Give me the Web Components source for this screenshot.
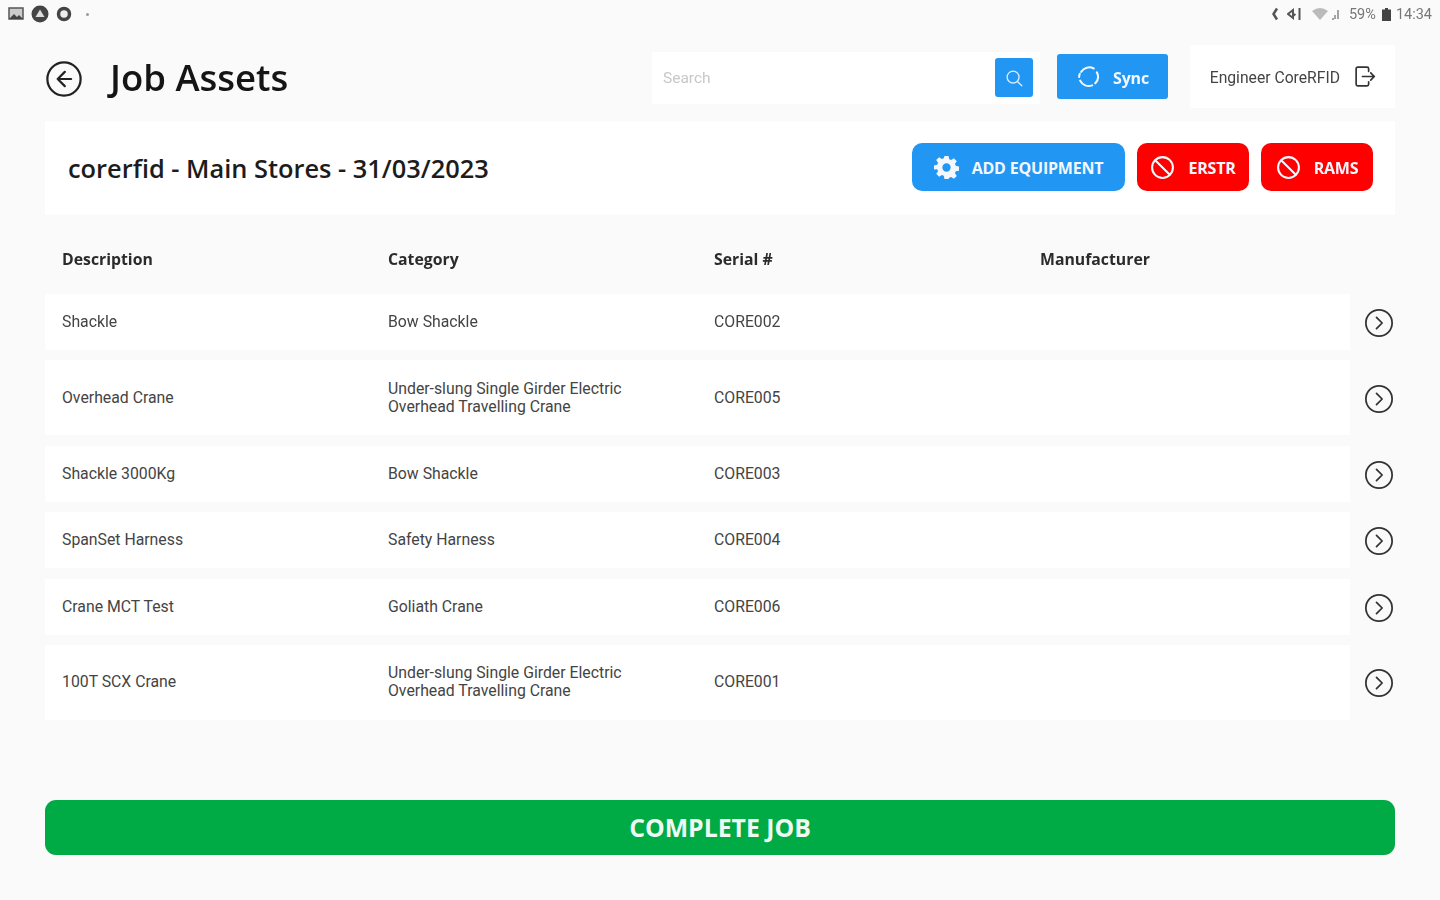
<!DOCTYPE html>
<html lang="en">
<head>
<meta charset="utf-8">
<title>Job Assets</title>
<style>
	html, body { margin: 0; height: 100%; background: #fafafa; }
	body { font-family: Roboto, "Liberation Sans", sans-serif; overflow: hidden; }
</style>
</head>
<body>
<job-assets-page></job-assets-page>

<script>
// shared icons, all drawn on a 24 box
const ICONS = {
	back: `<circle cx="12" cy="12" r="10.5"/><path d="M12.5 7.5 8 12l4.5 4.5M8 12h8.5"/>`,
	next: `<circle cx="12" cy="12" r="10.5"/><path d="m10 7.5 4.5 4.5-4.5 4.5"/>`,
	search: `<circle cx="11" cy="11" r="6.5"/><path d="m16 16 4.5 4.5"/>`,
	sync: `<path d="M5 7.5A9 9 0 0 1 17 4.3M20 8a9 9 0 0 1-1.5 10.5M15.5 20.5A9 9 0 0 1 4 16M3 12.5a9 9 0 0 1 .6-3"/>`,
	logout: `<path d="M15 7V4.5A1.5 1.5 0 0 0 13.5 3h-9A1.500 1.500 0 0 0 3 4.500v15A1.500 1.500 0 0 0 4.500 21h9a1.500 1.500 0 0 0 1.500-1.500V17M9 12h11M17 8.500l3.500 3.500-3.500 3.500"/>`,
	blocked: `<circle cx="12" cy="12" r="10"/><path d="m5 5 14 14"/>`,
	gear: `<path fill="currentColor" stroke="none" fill-rule="evenodd" d="M10 1h4l.6 3.100 1.900.8 2.600-1.800 2.800 2.800-1.800 2.600.8 1.900 3.100.6v4l-3.100.6-.8 1.900 1.800 2.600-2.800 2.800-2.600-1.800-1.900.8L14 23h-4l-.6-3.100-1.900-.8-2.600 1.800-2.800-2.800 1.800-2.600-.8-1.900L0 14v-4l3.100-.6.8-1.900-1.800-2.600 2.800-2.800 2.600 1.800 1.900-.8L10 1Zm2 7a4 4 0 1 0 0 8 4 4 0 0 0 0-8Z"/>`,
};

function icon(name, size, width = 2) {
	return `<svg width="${size}" height="${size}" viewBox="0 0 24 24" fill="none" stroke="currentColor" stroke-width="${width}" stroke-linecap="round" stroke-linejoin="round">${ICONS[name]}</svg>`;
}

class StatusBar extends HTMLElement {
	connectedCallback() {
		this.attachShadow({ mode: "open" }).innerHTML = `
			<style>
				:host { display: flex; justify-content: space-between; align-items: center; height: 28px; padding: 0 8px; color: #555; font: 13px Roboto, sans-serif; }
				.side { display: flex; align-items: center; gap: 7px; }
				.right { gap: 5px; color: #777; font-size: 14.500px; }
				.dot { width: 3px; height: 3px; border-radius: 50%; background: #999; margin-left: 7px; }
				svg { display: block; }
			</style>
			<div class="side">
				<svg width="16" height="14" viewBox="0 0 16 14"><rect x="1" y="1" width="14" height="11" fill="#ccc" stroke="#555" stroke-width="1.500"/><path d="M1 12l5-5 3 3 2-2 4 4z" fill="#444"/></svg>
				<svg width="18" height="18" viewBox="0 0 18 18"><circle cx="9" cy="9" r="8.500" fill="#444"/><path d="M9 4.500 13.500 12h-9z" fill="#ddd"/></svg>
				<svg width="16" height="16" viewBox="0 0 16 16"><circle cx="8" cy="8" r="5.500" fill="#eee" stroke="#444" stroke-width="3.500"/></svg>
				<span class="dot"></span>
			</div>
			<div class="side right">
				<svg width="8" height="14" viewBox="0 0 8 14" style="margin-right:3px"><path d="M6 1.500 2.500 7 6 12.500" fill="none" stroke="#555" stroke-width="2.500"/></svg>
				<svg width="14" height="14" viewBox="0 0 14 14" style="margin-right:5px"><path d="M1 7l5-4v8zM8.500 7 6 9M12.500 1v12" fill="none" stroke="#555" stroke-width="2"/></svg>
				<svg width="30" height="14" viewBox="0 0 30 14" style="margin-right:3px"><path d="M1 4q8-6 16 0l-8 9z" fill="#bbb"/><path d="M21 12h2M24 12V8M27 12V3" stroke="#888" stroke-width="1.500"/></svg>
				<span>59%</span>
				<svg width="9" height="13" viewBox="0 0 9 13" style="margin-left:1px"><path d="M3 0h3v1.500h3V13H0V1.500h3z" fill="#444"/></svg>
				<span>14:34</span>
			</div>`;
	}
}

class SearchBox extends HTMLElement {
	connectedCallback() {
		this.attachShadow({ mode: "open" }).innerHTML = `
			<style>
				:host { display: flex; align-items: center; justify-content: space-between; box-sizing: border-box; width: 388px; height: 52px; margin-top: 2px; padding: 0 7px 0 11px; background: #fff; }
				span { color: #c8c8c8; font: 15.500px Roboto, sans-serif; }
				button { display: flex; align-items: center; justify-content: center; width: 38px; height: 39px; padding: 0; border: 0; border-radius: 3px; background: #2196f3; color: #d7ecfd; }
			</style>
			<span>Search</span>
			<button>${icon("search", 22, 1.500)}</button>`;
	}
}

class AppButton extends HTMLElement {
	connectedCallback() {
		const name = this.getAttribute("icon");
		const isRed = this.hasAttribute("danger");
		this.attachShadow({ mode: "open" }).innerHTML = `
			<style>
				:host { display: inline-flex; align-items: center; justify-content: center; gap: var(--btn-gap, 13px); box-sizing: border-box; height: var(--btn-height, 48px); width: var(--btn-width, auto); border-radius: var(--btn-radius, 10px); background: ${isRed ? "#fe0000" : "#2196f3"}; color: #f2f8fe; font: 700 16px "Open Sans", sans-serif; letter-spacing: -.2px; }
				span { padding-top: 2px; }
				svg { display: block; }
			</style>
			${icon(name, 25, 2)}
			<span><slot></slot></span>`;
	}
}

class PageHeader extends HTMLElement {
	connectedCallback() {
		this.attachShadow({ mode: "open" }).innerHTML = `
			<style>
				:host { display: flex; align-items: center; height: 63px; }
				.back { display: block; margin: 5px 27px 0 0; color: #222; }
				h1 { flex: 1; margin: 0; padding-top: 2px; color: #151515; font: 600 36.500px/1 "Open Sans", sans-serif; }
				app-button { --btn-height: 45px; --btn-width: 111px; --btn-radius: 3px; --btn-gap: 12px; margin: 0 22px 0 17px; }
				.user { display: flex; align-items: center; justify-content: flex-end; gap: 13px; box-sizing: border-box; width: 205px; height: 63px; padding-right: 17px; background: #fff; color: #444; font: 15.700px Roboto, sans-serif; }
				.user span { padding-top: 2px; }
				.user svg { color: #333; }
				svg { display: block; }
			</style>
			<span class="back">${icon("back", 38, 1.400)}</span>
			<h1>Job Assets</h1>
			<search-box></search-box>
			<app-button icon="sync">Sync</app-button>
			<div class="user"><span>Engineer CoreRFID</span>${icon("logout", 25, 1.600)}</div>`;
	}
}

class JobBar extends HTMLElement {
	connectedCallback() {
		this.attachShadow({ mode: "open" }).innerHTML = `
			<style>
				:host { display: flex; align-items: center; gap: 12px; box-sizing: border-box; height: 94px; margin-top: 13px; padding: 0 22px 0 23px; background: #fff; }
				h2 { flex: 1; margin: 0; color: #1c1c1c; font: 600 25.400px "Open Sans", sans-serif; }
				app-button { margin-bottom: 2px; }
				.add { --btn-width: 213px; }
				.stop { --btn-width: 112px; }
			</style>
			<h2><slot></slot></h2>
			<app-button class="add" icon="gear">ADD EQUIPMENT</app-button>
			<app-button class="stop" icon="blocked" danger>ERSTR</app-button>
			<app-button class="stop" icon="blocked" danger>RAMS</app-button>`;
	}
}

class AssetHead extends HTMLElement {
	connectedCallback() {
		this.attachShadow({ mode: "open" }).innerHTML = `
			<style>
				:host { display: grid; grid-template-columns: repeat(4, 326px); align-items: center; box-sizing: border-box; height: 79px; padding: 9px 0 0 17px; color: #2b2b2b; font: 700 15.800px "Open Sans", sans-serif; }
			</style>
			<span>Description</span><span>Category</span><span>Serial #</span><span>Manufacturer</span>`;
	}
}

class AssetRow extends HTMLElement {
	connectedCallback() {
		const tall = this.hasAttribute("tall");
		this.attachShadow({ mode: "open" }).innerHTML = `
			<style>
				:host { display: flex; align-items: center; margin-bottom: 10.400px; color: #444; font: 15.800px/18px Roboto, sans-serif; }
				.cells { display: grid; grid-template-columns: repeat(4, 326px); align-items: center; box-sizing: border-box; width: 1305px; height: ${tall ? 75 : 56}px; padding-left: 17px; background: #fff; }
				.cat { width: 250px; }
				.go { display: block; margin: 2px 0 0 14px; color: #333; }
				.go svg { display: block; }
			</style>
			<div class="cells">
				<span>${this.getAttribute("description")}</span>
				<span class="cat">${this.getAttribute("category")}</span>
				<span>${this.getAttribute("serial")}</span>
				<span></span>
			</div>
			<span class="go">${icon("next", 30, 1.400)}</span>`;
	}
}

class CompleteButton extends HTMLElement {
	connectedCallback() {
		this.attachShadow({ mode: "open" }).innerHTML = `
			<style>
				:host { display: flex; align-items: center; justify-content: center; height: 55px; border-radius: 11px; background: #00aa45; color: #eefaf2; font: 700 24.800px "Open Sans", sans-serif; }
			</style>
			<slot></slot>`;
	}
}

class JobAssetsPage extends HTMLElement {
	connectedCallback() {
		const rows = [
			["Shackle", "Bow Shackle", "CORE002", false],
			["Overhead Crane", "Under-slung Single Girder Electric Overhead Travelling Crane", "CORE005", true],
			["Shackle 3000Kg", "Bow Shackle", "CORE003", false],
			["SpanSet Harness", "Safety Harness", "CORE004", false],
			["Crane MCT Test", "Goliath Crane", "CORE006", false],
			["100T SCX Crane", "Under-slung Single Girder Electric Overhead Travelling Crane", "CORE001", true],
		];
		this.attachShadow({ mode: "open" }).innerHTML = `
			<style>
				:host { display: block; height: 900px; filter: blur(.6px); }
				main { display: flex; flex-direction: column; padding: 17px 45px 0; }
				complete-button { margin-top: 69.600px; }
			</style>
			<status-bar></status-bar>
			<main>
				<page-header></page-header>
				<job-bar>corerfid - Main Stores - 31/03/2023</job-bar>
				<asset-head></asset-head>
				${rows.map(([d, c, s, tall]) => `<asset-row description="${d}" category="${c}" serial="${s}" ${tall ? "tall" : ""}></asset-row>`).join("")}
				<complete-button>COMPLETE JOB</complete-button>
			</main>`;
	}
}

customElements.define("status-bar", StatusBar);
customElements.define("search-box", SearchBox);
customElements.define("app-button", AppButton);
customElements.define("page-header", PageHeader);
customElements.define("job-bar", JobBar);
customElements.define("asset-head", AssetHead);
customElements.define("asset-row", AssetRow);
customElements.define("complete-button", CompleteButton);
customElements.define("job-assets-page", JobAssetsPage);
</script>
</body>
</html>
